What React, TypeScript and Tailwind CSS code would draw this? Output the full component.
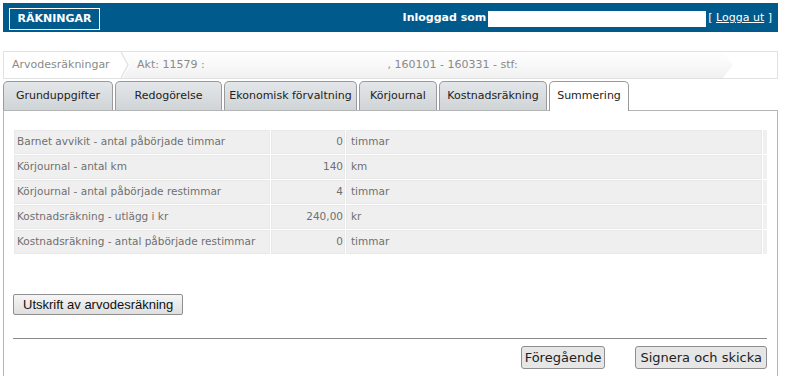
import React from "react";

const rows = [
  ["Barnet avvikit - antal påbörjade timmar", "0", "timmar"],
  ["Körjournal - antal km", "140", "km"],
  ["Körjournal - antal påbörjade restimmar", "4", "timmar"],
  ["Kostnadsräkning - utlägg i kr", "240,00", "kr"],
  ["Kostnadsräkning - antal påbörjade restimmar", "0", "timmar"],
];

const tabs = [
  { label: "Grunduppgifter", w: "w-[110px]" },
  { label: "Redogörelse", w: "w-[107px]" },
  { label: "Ekonomisk förvaltning", w: "w-[133px]" },
  { label: "Körjournal", w: "w-[78px]" },
  { label: "Kostnadsräkning", w: "w-[108px]" },
];

export default function App() {
  return (
    <div className="w-[795px] h-[376px] bg-white overflow-hidden font-['DejaVu_Sans',sans-serif]">
      <div className="ml-[3px] w-[775px] pt-[3px]">
        {/* header */}
        <div className="h-[29px] bg-[#005a8c] flex items-center justify-between pl-[6px] pr-[6px]">
          <div className="h-[22px] w-[91px] border border-white flex items-center justify-center text-white font-bold text-[11px] mt-[3px]">
            RÄKNINGAR
          </div>
          <div className="flex items-center text-white text-[11px] mt-[2px]">
            <span className="font-bold mr-[2px]">Inloggad som</span>
            <span className="inline-block w-[218px] h-[16px] bg-white mr-[2px]"></span>
            <span>
              [ <span className="underline">Logga ut</span> ]
            </span>
          </div>
        </div>

        {/* breadcrumb */}
        <div className="mt-[19px] h-[28px] border border-[#e2e2e2] flex items-stretch relative text-[11px] text-[#8a8a8a]">
          <div className="flex items-center pl-[8px] w-[119px] bg-white">Arvodesräkningar</div>
          <svg className="absolute left-[116px] top-0" width="10" height="26" viewBox="0 0 10 26">
            <polyline points="1,0 8,13 1,26" fill="none" stroke="#e4e4e4" strokeWidth="1.5" />
          </svg>
          <div className="flex items-center w-[610px] pl-[14px] bg-gradient-to-b from-white to-[#f1f1f1] [clip-path:polygon(0_0,600px_0,100%_50%,600px_100%,0_100%,7px_50%)]">
            <span>Akt: 11579 :</span>
            <span className="ml-[183px]">, 160101 - 160331 - stf:</span>
          </div>
        </div>

        {/* tabs */}
        <div className="mt-[2px] h-[29px] flex items-end gap-[2px] relative z-10">
          {tabs.map((t) => (
            <div
              key={t.label}
              className={`${t.w} h-[29px] border border-[#9a9a9a] border-b-0 rounded-t-[5px] bg-gradient-to-b from-[#e4e7e9] to-[#cfd4d7] flex items-center justify-center text-[11px] text-[#222] whitespace-nowrap`}
            >
              {t.label}
            </div>
          ))}
          <div className="w-[80px] h-[30px] border border-[#9a9a9a] border-b-0 rounded-t-[5px] bg-white flex items-center justify-center text-[11px] text-[#222] translate-y-[1px]">
            Summering
          </div>
        </div>

        {/* panel */}
        <div className="border-t border-l border-r border-[#b5b5b5] h-[300px] px-[9px] pt-[18px]">
          <table className="w-[755px] border-separate border-spacing-[1px] text-[10.5px] text-[#707070]">
            <tbody>
              {rows.map((r) => (
                <tr key={r[0]}>
                  <td className="h-[24px] w-[256px] bg-[#efefef] pl-[2px] border border-[#e9e9e9]">{r[0]}</td>
                  <td className="h-[24px] w-[74px] bg-[#efefef] text-right pr-[1px] border border-[#e9e9e9]">{r[1]}</td>
                  <td className="h-[24px] bg-[#efefef] pl-[4px] border border-[#e9e9e9]">{r[2]}</td>
                  <td className="h-[24px] w-[4px] bg-[#f0f0f0]"></td>
                </tr>
              ))}
            </tbody>
          </table>

          <button className="mt-[39px] h-[21px] px-[9px] border border-[#8f8f8f] rounded-[2px] bg-gradient-to-b from-[#f6f6f6] to-[#dedede] font-['Liberation_Sans',sans-serif] text-[13px] text-[#111] leading-none">
            Utskrift av arvodesräkning
          </button>

          <div className="mt-[22px] h-px bg-[#8a8a8a] w-[754px]"></div>

          <div className="mt-[7px] flex justify-end gap-[30px] w-[754px]">
            <button className="h-[23px] px-[3px] border border-[#8f8f8f] rounded-[3px] bg-[#e6e6e6] text-[13px] text-[#222] leading-none">
              Föregående
            </button>
            <button className="h-[23px] px-[4px] border border-[#8f8f8f] rounded-[3px] bg-[#e6e6e6] text-[13px] text-[#222] leading-none">
              Signera och skicka
            </button>
          </div>
        </div>
      </div>
    </div>
  );
}
